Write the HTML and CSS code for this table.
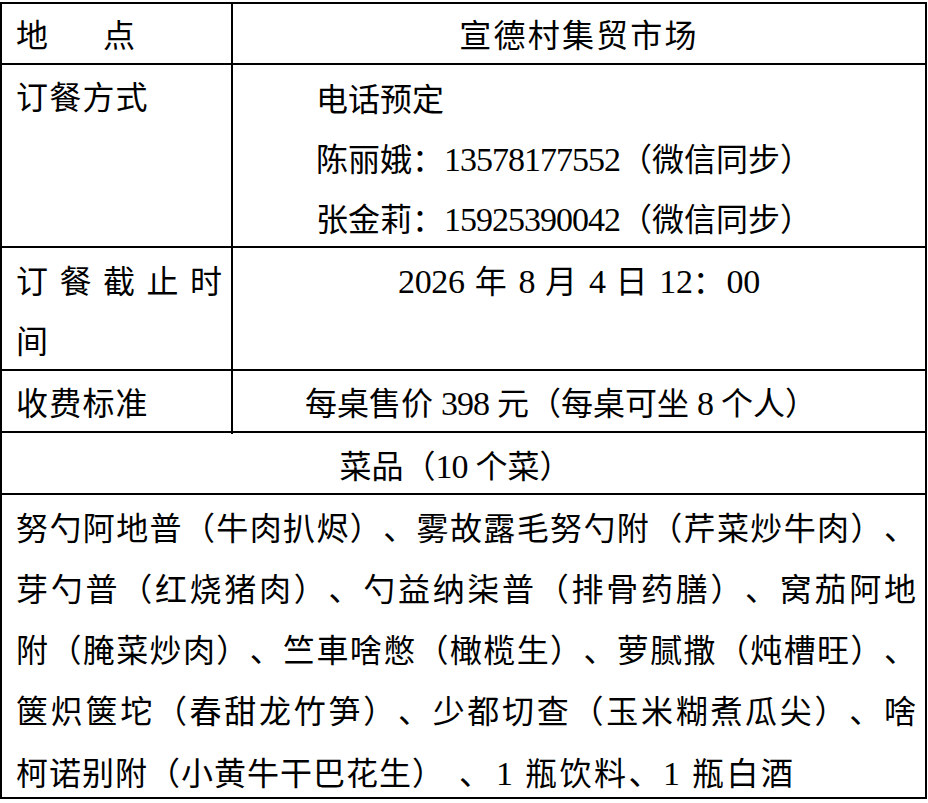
FILE: index.html
```html
<!DOCTYPE html>
<html lang="zh-CN">
<head>
<meta charset="utf-8">
<title>订餐信息</title>
<link rel="stylesheet" href="styles.css">
</head>
<body>
<div class="sheet">
  <div class="row r1">
    <div class="label">地<span class="gap"></span>点</div>
    <div class="value center venue">宣德村集贸市场</div>
  </div>
  <div class="row r2">
    <div class="label wide">订餐方式</div>
    <div class="value contacts">
      <div>电话预定</div>
      <div>陈丽娥：<span class="num">13578177552</span>（微信同步）</div>
      <div>张金莉：<span class="num">15925390042</span>（微信同步）</div>
    </div>
  </div>
  <div class="row r3">
    <div class="label">
      <div class="spread"><span>订</span><span>餐</span><span>截</span><span>止</span><span>时</span></div>
      <div>间</div>
    </div>
    <div class="value center date"><span class="num">2026</span> 年 <span class="num">8</span> 月 <span class="num">4</span> 日 <span class="num">12</span>：<span class="num">00</span></div>
  </div>
  <div class="row r4">
    <div class="label wide">收费标准</div>
    <div class="value center price">每桌售价 <span class="num">398</span> 元（每桌可坐 <span class="num">8</span> 个人）</div>
  </div>
  <div class="full r5">菜品（<span class="num">10</span> 个菜）</div>
  <div class="dishes">
    <div class="line l27">努勺阿地普（牛肉扒烬）、雾故露毛努勺附（芹菜炒牛肉）、</div>
    <div class="line l26">芽勺普（红烧猪肉）、勺益纳柒普（排骨药膳）、窝茄阿地</div>
    <div class="line l27">附（腌菜炒肉）、竺車啥憋（橄榄生）、萝腻撒（炖槽旺）、</div>
    <div class="line l26">箧炽箧坨（春甜龙竹笋）、少都切查（玉米糊煮瓜尖）、啥</div>
    <div class="line last">柯诺别附（小黄牛干巴花生）<span class="comma">、</span><span class="tail"><span class="num">1</span> 瓶饮料、<span class="num">1</span> 瓶白酒</span></div>
  </div>
</div>
</body>
</html>
```
FILE: styles.css
```css
html, body {
  margin: 0;
  padding: 0;
  background: #fff;
}

.sheet {
  box-sizing: border-box;
  width: 927px;
  margin-top: 2px;
  border: 2px solid #000;
  font-family: "Liberation Serif", "Noto Sans CJK SC", serif;
  font-size: 32px;
  line-height: 60px;
  color: #000;
  text-spacing-trim: space-all;
}

.num {
  font-size: 34px;
  letter-spacing: -1px;
}

.row {
  display: grid;
  grid-template-columns: 231px 1fr;
  box-sizing: border-box;
  border-bottom: 2px solid #000;
}

.label {
  box-sizing: border-box;
  border-right: 2px solid #000;
  padding-left: 14px;
}

.wide {
  letter-spacing: 1.2px;
}

.gap {
  display: inline-block;
  width: 55px;
}

.center {
  text-align: center;
}

.r1 { height: 61px; }
.r1 .label, .r1 .value { padding-top: 2px; }

.venue { letter-spacing: 2.2px; }

.r2 { height: 183px; }
.r2 .label { padding-top: 3px; }
.contacts {
  padding-top: 5px;
  padding-left: 83px;
}

.r3 { height: 123px; }
.r3 .label, .r3 .value { padding-top: 4px; }
.spread {
  display: flex;
  justify-content: space-between;
  width: 206px;
}
.date { letter-spacing: 1.9px; }
.date .num { letter-spacing: -0.3px; }

.r4 { height: 62px; }
.r4 .label, .r4 .value { padding-top: 3px; }
.price { padding-right: 36px; }

.full {
  box-sizing: border-box;
  border-bottom: 2px solid #000;
}

.r5 {
  height: 62px;
  padding-top: 4px;
  padding-right: 16px;
  text-align: center;
}

.dishes {
  box-sizing: border-box;
  height: 302px;
  padding: 4px 9px 0 14px;
  line-height: 61px;
}

.line {
  white-space: nowrap;
}

.l27 { letter-spacing: 1.38px; }
.l26 { letter-spacing: 2.72px; }

.last {
  letter-spacing: 1px;
}

.comma {
  margin-left: 14px;
}

.tail {
  letter-spacing: 2.5px;
  margin-left: 4px;
}

.tail .num {
  letter-spacing: 1.5px;
}
```
